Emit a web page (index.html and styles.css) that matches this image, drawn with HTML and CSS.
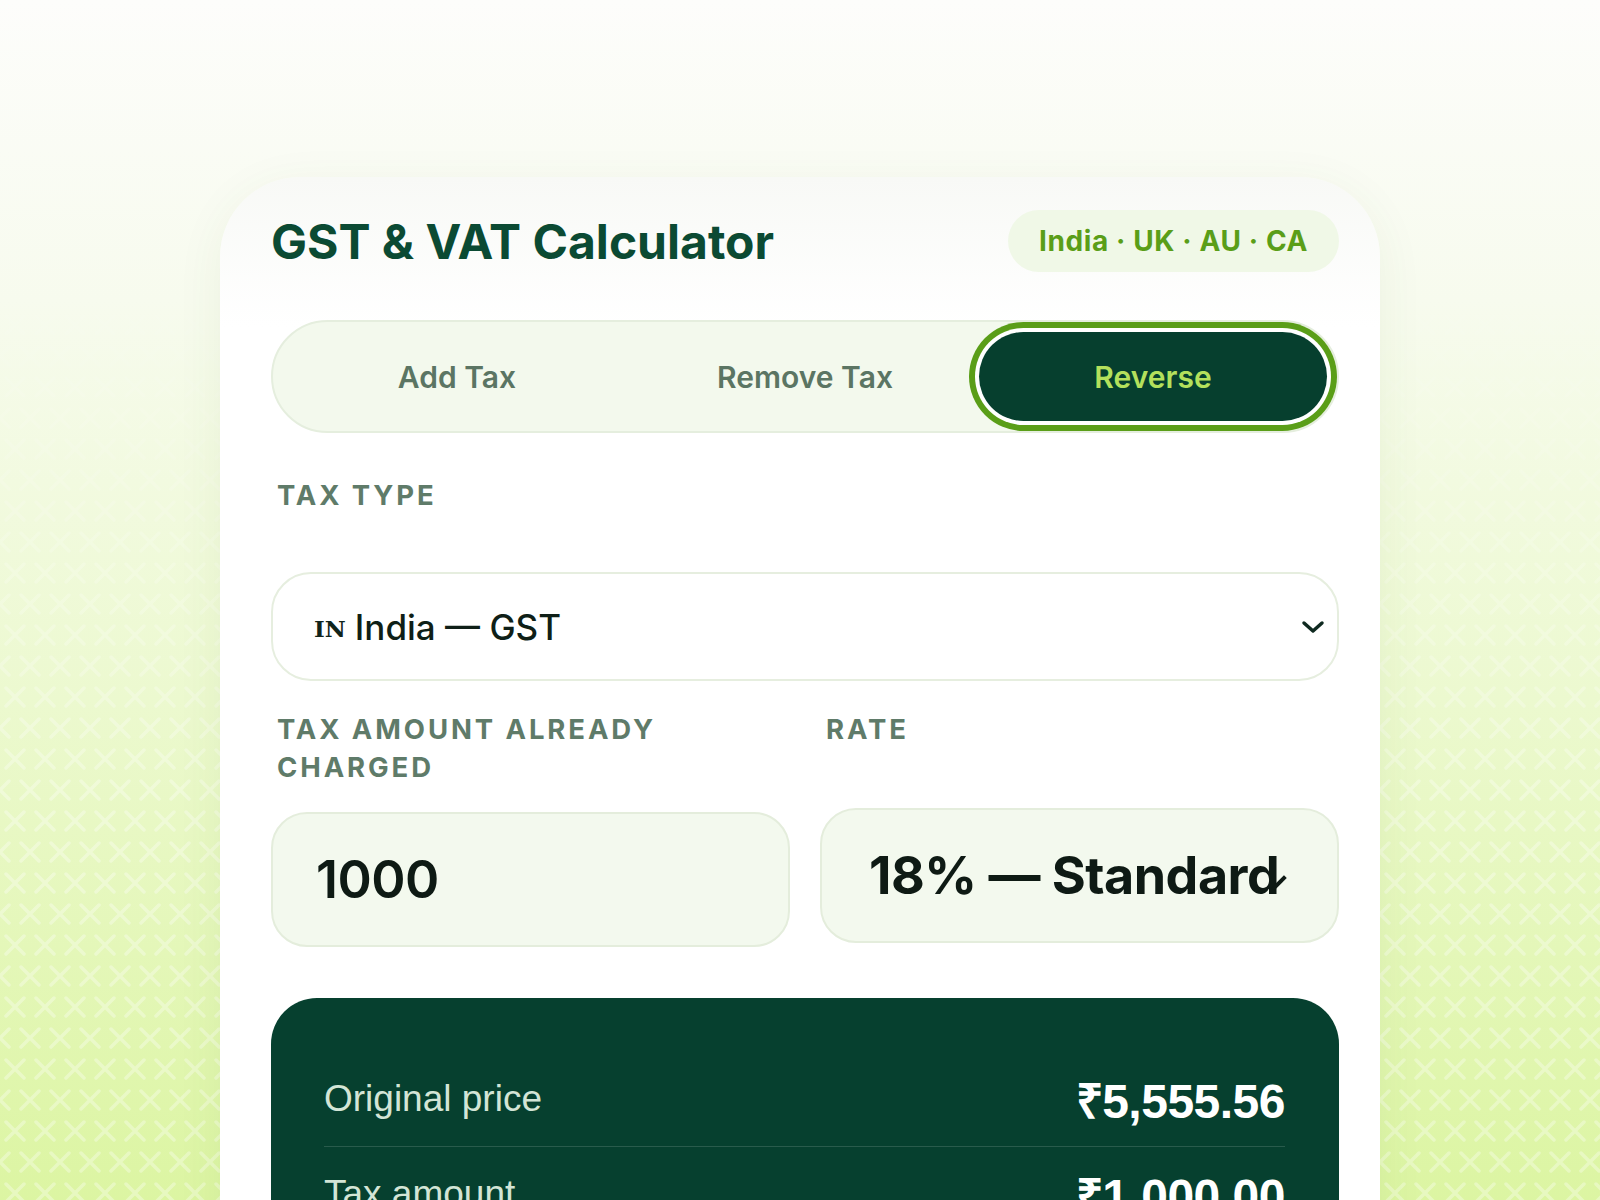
FILE: index.html
```html
<!DOCTYPE html>
<html lang="en">
  <head>
    <meta charset="UTF-8" />
    <meta name="viewport" content="width=device-width, initial-scale=1.0" />
    <title>GST &amp; VAT Calculator</title>
    <link rel="stylesheet" href="styles.css">
  </head>
  <body>
    <div class="calculator">
      <div class="calc-header">
        <h1>GST &amp; VAT Calculator</h1>
        <span class="regions">India · UK · AU · CA</span>
      </div>

      <div class="mode-tabs">
        <button class="mode-tab">Add Tax</button>
        <button class="mode-tab">Remove Tax</button>
        <button class="mode-tab active">Reverse</button>
      </div>

      <div class="field-label tax-type-label">Tax Type</div>
      <div class="select-box">
        <span class="flag">IN</span>
        <span class="select-text">India — GST</span>
        <svg class="chevron" width="24" height="14" viewBox="0 0 24 14">
          <path d="M3 3l9 8 9-8" fill="none" stroke="#0f2a20" stroke-width="3.5" stroke-linecap="round" stroke-linejoin="round" />
        </svg>
      </div>

      <div class="field-row">
        <div class="field-label">Tax amount already charged</div>
        <div class="field-label">Rate</div>
        <div class="amount-field">1000</div>
        <div class="rate-field">
          <span class="rate-text">18% — Standard</span>
          <span class="rate-arrow"></span>
        </div>
      </div>

      <div class="results">
        <div class="result-row">
          <span class="result-name">Original price</span>
          <span class="result-value">₹5,555.56</span>
        </div>
        <div class="result-row">
          <span class="result-name">Tax amount</span>
          <span class="result-value">₹1,000.00</span>
        </div>
        <div class="result-row">
          <span class="result-name">Total paid</span>
          <span class="result-value">₹6,555.56</span>
        </div>
      </div>
    </div>
  </body>
</html>
```

FILE: styles.css
```css
html,
body {
  height: 1200px;
  overflow: hidden;
}
body {
  margin: 0;
  position: relative;
  font-family: Inter, "Liberation Sans", sans-serif;
  background: linear-gradient(180deg, #fdfdfb 0px, #f7fbee 300px, #ecf9cf 700px, #dcf5a2 1200px);
}
body::before {
  content: "";
  position: absolute;
  inset: 0;
  background-image: url("data:image/svg+xml,%3Csvg xmlns='http://www.w3.org/2000/svg' width='30' height='62'%3E%3Cg stroke='%23ffffff' stroke-width='3.5' stroke-linecap='round' opacity='.32'%3E%3Cpath d='M6 6l18 18M24 6L6 24M-9 37l18 18M9 37l-18 18M21 37l18 18M39 37l-18 18'/%3E%3C/g%3E%3C/svg%3E");
  -webkit-mask-image: linear-gradient(180deg, transparent 220px, #000 800px);
  mask-image: linear-gradient(180deg, transparent 220px, #000 800px);
}

.calculator {
  position: relative;
  width: 1160px;
  margin: 177px auto 0;
  padding: 33px 41px 60px 51px;
  box-sizing: border-box;
  background: linear-gradient(180deg, #f8f9f6 0px, #ffffff 150px);
  border-radius: 80px 80px 0 0;
  box-shadow: 0 10px 50px rgba(70, 100, 30, 0.06);
}

.calc-header {
  display: flex;
  justify-content: space-between;
  align-items: center;
}
h1 {
  margin: 0;
  font-size: 48px;
  font-weight: 700;
  color: #0b4a33;
}
.regions {
  height: 62px;
  line-height: 62px;
  padding: 0 31px;
  border-radius: 31px;
  background-color: #f0f8e7;
  color: #5a9e18;
  font-size: 28px;
  font-weight: 700;
  letter-spacing: 0.6px;
}

.mode-tabs {
  margin-top: 48px;
  display: grid;
  grid-template-columns: repeat(3, 1fr);
  padding: 10px;
  border: 2px solid #e5eede;
  border-radius: 57px;
  background-color: #f3f9ed;
}
.mode-tab {
  height: 89px;
  border: none;
  border-radius: 45px;
  background: none;
  font-family: Inter, sans-serif;
  font-size: 30px;
  font-weight: 600;
  color: #5b7563;
  cursor: pointer;
}
.mode-tab.active {
  background-color: #063f2e;
  color: #b4e05c;
  box-shadow: 0 0 0 4px #ffffff, 0 0 0 10px #5a9e18;
}

.field-label {
  font-size: 27.5px;
  font-weight: 700;
  line-height: 38px;
  letter-spacing: 2.9px;
  text-transform: uppercase;
  color: #5f7b69;
}
.tax-type-label {
  margin: 43px 0 58px 6px;
}

.select-box {
  display: flex;
  align-items: center;
  height: 109px;
  padding: 0 12px 0 41px;
  box-sizing: border-box;
  border: 2px solid #e6eedf;
  border-radius: 40px;
  background-color: #fff;
}
.flag {
  font-family: "DejaVu Serif", serif;
  font-size: 23px;
  font-weight: 700;
  color: #10241b;
  margin-right: 9px;
  padding-top: 4px;
}
.select-text {
  flex: 1;
  font-size: 35px;
  font-weight: 500;
  color: #0f1f17;
}

.field-row {
  margin-top: 29px;
  display: grid;
  grid-template-columns: 1fr 1fr;
  column-gap: 30px;
  align-items: start;
}
.field-row .field-label {
  padding-left: 6px;
  margin-bottom: 22px;
}
.amount-field,
.rate-field {
  height: 135px;
  box-sizing: border-box;
  display: flex;
  align-items: center;
  border: 2px solid #e4eddc;
  border-radius: 36px;
  background-color: #f3f9ee;
  color: #0e1a14;
  font-size: 52px;
}
.amount-field {
  margin-top: 4px;
  padding-left: 43px;
  font-weight: 600;
  letter-spacing: -0.5px;
}
.rate-field {
  position: relative;
  padding-left: 47px;
  font-weight: 700;
  letter-spacing: -0.5px;
}
.rate-text {
  width: 418px;
  overflow: hidden;
  white-space: nowrap;
}
.rate-arrow {
  position: absolute;
  left: 455px;
  top: 64px;
  width: 4px;
  height: 18px;
  background-color: #0e1a14;
  transform: rotate(45deg);
}

.results {
  margin-top: 51px;
  padding: 54px 54px 20px 53px;
  border-radius: 46px;
  background-color: #06402f;
  font-family: "Liberation Sans", Arial, sans-serif;
}
.result-row {
  display: flex;
  justify-content: space-between;
  align-items: center;
  height: 94px;
  border-bottom: 1px solid rgba(255, 255, 255, 0.14);
}
.result-name {
  font-size: 37px;
  color: #d3e5d6;
}
.result-value {
  font-size: 48px;
  font-weight: 700;
  letter-spacing: -0.5px;
  color: #ffffff;
}
```
